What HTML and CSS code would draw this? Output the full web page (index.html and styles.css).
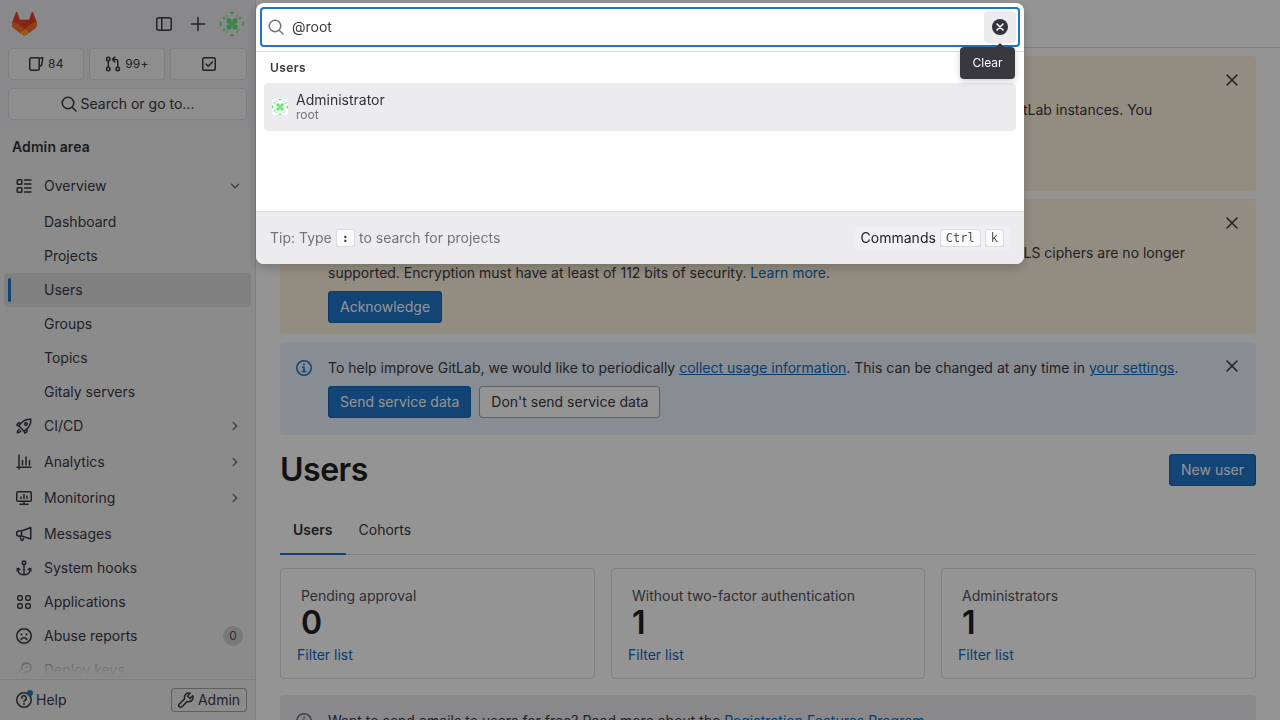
FILE: index.html
```html
<!DOCTYPE html>
<html lang="en">
<head>
<meta charset="utf-8">
<title>Users · Admin area · GitLab</title>
<link rel="stylesheet" href="styles.css">
</head>
<body>
<svg class="sprite" aria-hidden="true">
  <symbol id="i-search" viewBox="0 0 16 16"><circle cx="7" cy="7" r="5.75" class="s"/><path d="M11.2 11.2 15 15" class="s"/></symbol>
  <symbol id="i-close" viewBox="0 0 16 16"><path d="M3 3l10 10M13 3 3 13" class="s"/></symbol>
  <symbol id="i-panel" viewBox="0 0 16 16"><rect x=".75" y="1.75" width="14.5" height="12.5" rx="2" class="s"/><path d="M5.75 2v12" class="s"/></symbol>
  <symbol id="i-plus" viewBox="0 0 16 16"><path d="M8 1.5v13M1.5 8h13" class="s"/></symbol>
  <symbol id="i-issues" viewBox="0 0 16 16"><path d="M10.5 1.75H3.5a1.75 1.75 0 0 0-1.75 1.75v9a1.75 1.75 0 0 0 1.75 1.75h6a1.75 1.75 0 0 0 1.75-1.75V2.5M11.25 2.2c1.3-.6 2.8-.6 3.5-.4l-1 7-2.5 2" class="s"/></symbol>
  <symbol id="i-mr" viewBox="0 0 16 16"><circle cx="3.25" cy="3" r="1.75" class="s"/><circle cx="3.25" cy="13" r="1.75" class="s"/><circle cx="12.75" cy="13" r="1.75" class="s"/><path d="M3.25 4.75v6.5M12.75 11.25V5.5a2 2 0 0 0-2-2H8M9.8 1 7.5 3.5 9.8 6" class="s"/></symbol>
  <symbol id="i-todo" viewBox="0 0 16 16"><rect x="1.75" y="1.75" width="12.5" height="12.5" rx="1.75" class="s"/><path d="M5 8l2.2 2.2L11.5 6" class="s"/></symbol>
  <symbol id="i-overview" viewBox="0 0 16 16"><rect x="1.25" y="1.75" width="4.5" height="4.5" rx=".75" class="s"/><rect x="1.25" y="9.75" width="4.5" height="4.5" rx=".75" class="s"/><path d="M8.5 2h6.5M8.5 6h6.5M8.5 10h6.5M8.5 14h6.5" class="s"/></symbol>
  <symbol id="i-down" viewBox="0 0 16 16"><path d="M4.5 6.25 8 9.75l3.5-3.5" class="s"/></symbol>
  <symbol id="i-right" viewBox="0 0 16 16"><path d="M6.25 4.5 9.75 8l-3.5 3.5" class="s"/></symbol>
  <symbol id="i-rocket" viewBox="0 0 16 16"><path d="M5 5.2C7.5 2.4 10.8 1 14.8 1.2c.2 4-1.2 7.3-4 9.8l-2.7 2.2-5.3-5.3L5 5.2ZM5.3 5H2.2L.9 7.2l2 .8M11 10.7v3.1L8.8 15.1l-.8-2M3 11.3c-1 .6-1.6 1.7-1.7 3.4 1.700-.1 2.800-.7 3.400-1.700" class="s"/><circle cx="10" cy="6" r="1.3" class="s"/></symbol>
  <symbol id="i-chart" viewBox="0 0 16 16"><path d="M1 13.250h14M3 1v14M6.500 6.500v4.500M10 3v8M13.500 6.500v4.500" class="s"/></symbol>
  <symbol id="i-monitor" viewBox="0 0 16 16"><rect x=".75" y="1.750" width="14.500" height="9.500" rx="1.250" class="s"/><path d="M8 11.500v3M4 14.250h8M5 8.500V7M8 8.500V4.500M11 8.500V6" class="s"/></symbol>
  <symbol id="i-mega" viewBox="0 0 16 16"><path d="M14.750 1.500v11.500L5.500 10H2.500a1.750 1.750 0 0 1-1.750-1.750v-1.500A1.750 1.750 0 0 1 2.500 5h3l9.250-3.500ZM5.500 5v5M4 10.200l1 3.300a1.250 1.250 0 0 0 2.400-.7L6.800 10.600" class="s"/></symbol>
  <symbol id="i-anchor" viewBox="0 0 16 16"><circle cx="8" cy="2.750" r="1.750" class="s"/><path d="M8 4.500v10.250M1.200 8.500l.8 2.500c.7 2.300 3 3.750 6 3.750s5.300-1.450 6-3.750l.8-2.500M1 10.700l1-2.200 2 1.200M15 10.700l-1-2.200-2 1.200" class="s"/></symbol>
  <symbol id="i-apps" viewBox="0 0 16 16"><rect x="1.750" y="1.750" width="4.500" height="4.500" rx="1.500" class="s"/><rect x="9.750" y="1.750" width="4.500" height="4.500" rx="1.500" class="s"/><rect x="1.750" y="9.750" width="4.500" height="4.500" rx="1.500" class="s"/><rect x="9.750" y="9.750" width="4.500" height="4.500" rx="1.500" class="s"/></symbol>
  <symbol id="i-sad" viewBox="0 0 16 16"><circle cx="8" cy="8" r="7.250" class="s"/><path d="M5 11.500c.7-1.200 1.700-1.800 3-1.800s2.300.6 3 1.800" class="s"/><circle cx="5.500" cy="6.500" r="1" class="f"/><circle cx="10.500" cy="6.500" r="1" class="f"/></symbol>
  <symbol id="i-key" viewBox="0 0 16 16"><path d="M10.500 1a4.500 4.500 0 0 0-4.300 5.800L1 12v3h3l1-1v-1.500h1.500V11H8l1.200-1.200A4.500 4.500 0 1 0 10.500 1Z" class="s"/><circle cx="11" cy="5" r="1" class="f"/></symbol>
  <symbol id="i-help" viewBox="0 0 16 16"><circle cx="8" cy="8" r="7.250" class="s"/><path d="M5.700 6.200A2.300 2.300 0 1 1 9 8.200c-.6.300-1 .8-1 1.500" class="s"/><circle cx="8" cy="12" r="1" class="f"/></symbol>
  <symbol id="i-wrench" viewBox="0 0 16 16"><path d="M14.700 3.800 12 6.500l-2.500-2.500 2.700-2.700a4.250 4.250 0 0 0-5.500 5.400L1.300 12a1.900 1.900 0 0 0 2.700 2.700l5.300-5.300a4.250 4.250 0 0 0 5.400-5.600Z" class="s"/></symbol>
  <symbol id="i-info" viewBox="0 0 16 16"><circle cx="8" cy="8" r="7.250" class="s"/><circle cx="8" cy="4.500" r="1" class="f"/><path d="M6.500 7.250H8v4.250M6.250 11.500h3.500" class="s"/></symbol>
  <symbol id="i-avatar" viewBox="0 0 24 24">
    <g class="av">
      <circle cx="9" cy="9" r="2.700"/><circle cx="15" cy="9" r="2.700"/><circle cx="9" cy="15" r="2.700"/><circle cx="15" cy="15" r="2.700"/>
      <path d="M10 12h4v-1.500h-4zM10.500 13.500h3V10.500h-3z"/>
      <path d="M9 0h6l-3 2.500zM9 24h6l-3-2.500zM0 9v6l2.500-3zM24 9v6l-2.500-3z"/>
      <path d="M2 4.500 6 6l-2 2zM22 4.500 18 6l2 2zM2 19.500 6 18l-2-2zM22 19.500 18 18l-2-2zM5 2l3 2-1.500 1zM19 2l-3 2 1.500 1zM5 22l3-2-1.500-1zM19 22l-3-2 1.500-1z"/>
    </g>
  </symbol>
</svg>

<div class="app">
  <aside class="sidebar">
    <div class="side-top">
      <div class="brand-row">
        <svg class="logo" viewBox="0 0 25 24" width="25" height="24" aria-label="GitLab">
          <path d="m24.507 9.5-.034-.09L21.082.562a.896.896 0 0 0-1.694.091l-2.29 7.01H7.825L5.535.653a.898.898 0 0 0-1.694-.09L.451 9.411.416 9.5a6.297 6.297 0 0 0 2.09 7.278l.012.01.03.022 5.16 3.867 2.56 1.935 1.554 1.176a1.051 1.051 0 0 0 1.268 0l1.555-1.176 2.56-1.935 5.197-3.89.014-.01A6.297 6.297 0 0 0 24.507 9.5Z" fill="#E24329"/>
          <path d="m24.507 9.5-.034-.09a11.44 11.44 0 0 0-4.56 2.051l-7.447 5.632 4.742 3.584 5.197-3.89.014-.01A6.297 6.297 0 0 0 24.507 9.5Z" fill="#FC6D26"/>
          <path d="m7.707 20.677 2.56 1.935 1.555 1.176a1.051 1.051 0 0 0 1.268 0l1.555-1.176 2.56-1.935-4.743-3.584-4.755 3.584Z" fill="#FCA326"/>
          <path d="M5.01 11.461a11.43 11.43 0 0 0-4.56-2.05L.416 9.5a6.297 6.297 0 0 0 2.09 7.278l.012.01.03.022 5.16 3.867 4.745-3.584-7.444-5.632Z" fill="#FC6D26"/>
        </svg>
        <div class="brand-actions">
          <svg class="ico"><use href="#i-panel"/></svg>
          <svg class="ico"><use href="#i-plus"/></svg>
          <span class="avatar-wrap"><svg class="avatar"><use href="#i-avatar"/></svg></span>
        </div>
      </div>
      <div class="counts">
        <div class="count-btn"><svg class="ico"><use href="#i-issues"/></svg><span>84</span></div>
        <div class="count-btn"><svg class="ico"><use href="#i-mr"/></svg><span>99+</span></div>
        <div class="count-btn"><svg class="ico"><use href="#i-todo"/></svg></div>
      </div>
      <div class="search-btn"><svg class="ico"><use href="#i-search"/></svg><span>Search or go to...</span></div>
    </div>
    <nav class="side-nav">
      <div class="side-title">Admin area</div>
      <a class="row tall"><svg class="ico"><use href="#i-overview"/></svg><span class="row-label">Overview</span><svg class="chev"><use href="#i-down"/></svg></a>
      <div class="sub">
        <a class="row">Dashboard</a>
        <a class="row">Projects</a>
        <a class="row current">Users</a>
        <a class="row">Groups</a>
        <a class="row">Topics</a>
        <a class="row">Gitaly servers</a>
      </div>
      <a class="row"><svg class="ico"><use href="#i-rocket"/></svg><span class="row-label">CI/CD</span><svg class="chev"><use href="#i-right"/></svg></a>
      <a class="row tall gap"><svg class="ico"><use href="#i-chart"/></svg><span class="row-label">Analytics</span><svg class="chev"><use href="#i-right"/></svg></a>
      <a class="row tall"><svg class="ico"><use href="#i-monitor"/></svg><span class="row-label">Monitoring</span><svg class="chev"><use href="#i-right"/></svg></a>
      <a class="row mid"><svg class="ico"><use href="#i-mega"/></svg><span class="row-label">Messages</span></a>
      <a class="row"><svg class="ico"><use href="#i-anchor"/></svg><span class="row-label">System hooks</span></a>
      <a class="row"><svg class="ico"><use href="#i-apps"/></svg><span class="row-label">Applications</span></a>
      <a class="row"><svg class="ico"><use href="#i-sad"/></svg><span class="row-label">Abuse reports</span><span class="pill">0</span></a>
      <a class="row"><svg class="ico"><use href="#i-key"/></svg><span class="row-label">Deploy keys</span></a>
      <div class="fade"></div>
    </nav>
    <div class="side-foot">
      <div class="help"><span class="help-ico"><svg class="ico"><use href="#i-help"/></svg><i class="dot"></i></span><span>Help</span></div>
      <div class="admin-btn"><svg class="ico"><use href="#i-wrench"/></svg><span>Admin</span></div>
    </div>
  </aside>

  <main class="main">
    <header class="topbar"></header>
    <div class="content">
      <section class="alert warn first">
        <svg class="ico alert-close"><use href="#i-close"/></svg>
        <h4 class="alert-title">Check your sign-up restrictions</h4>
        <p class="alert-text">Your GitLab instance allows anyone to register for an account, which is a security risk on public-facing GitLab instances. You should deactivate new sign ups if public users aren't expected to register for an account.</p>
      </section>
      <section class="alert warn second">
        <svg class="ico alert-close"><use href="#i-close"/></svg>
        <h4 class="alert-title">OpenSSL version 3</h4>
        <p class="alert-text">Starting with GitLab 17.7, OpenSSL 3 will be used. All TLS connections require TLS 1.2 or above. Weaker TLS ciphers are no longer supported. Encryption must have at least of 112 bits of security. <a class="link">Learn more</a>.</p>
        <div class="alert-actions"><span class="btn primary">Acknowledge</span></div>
      </section>
      <section class="alert info">
        <svg class="ico alert-icon"><use href="#i-info"/></svg>
        <svg class="ico alert-close"><use href="#i-close"/></svg>
        <p class="alert-text">To help improve GitLab, we would like to periodically <a class="link under">collect usage information</a>. This can be changed at any time in <a class="link under">your settings</a>.</p>
        <div class="alert-actions"><span class="btn primary">Send service data</span><span class="btn outline">Don't send service data</span></div>
      </section>

      <div class="page-head">
        <h1 class="page-title">Users</h1>
        <span class="btn primary">New user</span>
      </div>

      <div class="tabs">
        <a class="tab active">Users</a>
        <a class="tab">Cohorts</a>
      </div>

      <div class="cards">
        <div class="card"><div class="card-label">Pending approval</div><div class="card-num">0</div><a class="card-link">Filter list</a></div>
        <div class="card"><div class="card-label">Without two-factor authentication</div><div class="card-num">1</div><a class="card-link">Filter list</a></div>
        <div class="card"><div class="card-label">Administrators</div><div class="card-num">1</div><a class="card-link">Filter list</a></div>
      </div>

      <section class="alert neutral">
        <svg class="ico alert-icon"><use href="#i-info"/></svg>
        <p class="alert-text">Want to send emails to users for free? Read more about the <a class="link">Registration Features Program</a>.</p>
      </section>
    </div>
  </main>
</div>

<div class="backdrop"></div>

<div class="modal" role="dialog">
  <div class="modal-search">
    <div class="input">
      <svg class="ico input-ico"><use href="#i-search"/></svg>
      <span class="input-text">@root</span>
      <span class="clear-btn">
        <svg class="clear-ico" viewBox="0 0 16 16"><circle cx="8" cy="8" r="8" fill="#333238"/><path d="M5 5l6 6M11 5l-6 6" stroke="#fff" stroke-width="1.600" stroke-linecap="round"/></svg>
      </span>
    </div>
  </div>
  <div class="modal-body">
    <div class="group-title">Users</div>
    <div class="result">
      <svg class="result-avatar"><use href="#i-avatar"/></svg>
      <div class="result-text"><div class="result-name">Administrator</div><div class="result-sub">root</div></div>
    </div>
  </div>
  <div class="modal-foot">
    <div class="tip">Tip: Type <kbd class="key">:</kbd> to search for projects</div>
    <div class="cmds"><span>Commands</span><kbd class="key">Ctrl</kbd><kbd class="key">k</kbd></div>
  </div>
  <div class="tooltip">Clear</div>
</div>
</body>
</html>
```
FILE: styles.css
```css
* { box-sizing: border-box; }
html, body { margin: 0; height: 100%; overflow: hidden; }
body { font-family: Inter, "Noto Sans", sans-serif; font-size: 14px; line-height: 20px; color: #3a383f; background: #fff; }
.sprite { position: absolute; width: 0; height: 0; }
.s { fill: none; stroke: currentColor; stroke-width: 1.5; stroke-linecap: round; stroke-linejoin: round; }
.f { fill: currentColor; }
.av { fill: #66e37d; }
.ico { width: 16px; height: 16px; flex: none; display: block; color: #3a383f; }
p, h1, h4 { margin: 0; }

.app { display: flex; height: 720px; overflow: hidden; }

/* Sidebar */
.sidebar { width: 256px; flex: none; height: 720px; display: flex; flex-direction: column; background: #f0f0f2; border-right: 1px solid #dcdcde; }
.side-top { height: 127px; flex: none; padding: 0 8px; background: #ececef; }
.brand-row { height: 48px; display: flex; align-items: center; justify-content: space-between; padding: 0 4px; }
.logo { display: block; }
.brand-actions { display: flex; align-items: center; gap: 18px; margin-right: -1px; }
.avatar-wrap { width: 24px; height: 24px; border-radius: 50%; background: #eee; display: block; margin-left: -4px; overflow: hidden; }
.avatar { width: 24px; height: 24px; display: block; }
.counts { display: grid; grid-template-columns: 76px 76px 77px; gap: 5px; }
.count-btn { height: 32px; display: flex; align-items: center; justify-content: center; gap: 4px; border-radius: 4px; background: #f4f4f5; box-shadow: inset 0 0 0 1px #dcdcde; font-size: 12px; letter-spacing: .3px; }
.search-btn { margin-top: 8px; height: 32px; display: flex; align-items: center; justify-content: center; gap: 4px; border-radius: 4px; background: #f4f4f5; box-shadow: inset 0 0 0 1px #dcdcde; }
.side-nav { position: relative; flex: 1; min-height: 0; overflow: hidden; }
.side-title { height: 41px; padding: 10px 12px 0; font-weight: 600; letter-spacing: .1px; color: #333238; }
.row { height: 34px; margin: 0 4px; padding-left: 12px; display: flex; align-items: center; gap: 12px; border-radius: 4px; color: #3a383f; position: relative; }
.row.tall { height: 36px; }
.row.mid { height: 35px; }
.row.gap { margin-top: 1px; }
.row-label { flex: 1; }
.sub { margin-top: 1px; }
.sub .row { padding-left: 40px; }
.current { background: #dcdcde; }
.current::before { content: ""; position: absolute; left: 4px; top: 5px; bottom: 5px; width: 3px; border-radius: 2px; background: #1f75cb; }
.chev { width: 16px; height: 16px; margin-right: 8px; color: #737278; flex: none; display: block; }
.pill { width: 20px; height: 20px; margin-right: 8px; border-radius: 50%; background: #d1d0d3; font-size: 12px; text-align: center; color: #535158; }
.fade { position: absolute; left: 0; right: 0; bottom: 0; height: 36px; background: linear-gradient(to bottom, rgba(240,240,242,0), #f0f0f2 90%); }
.side-foot { height: 41px; flex: none; border-top: 1px solid #dcdcde; display: flex; align-items: center; justify-content: space-between; padding: 0 8px 0 16px; }
.help { display: flex; align-items: center; gap: 4px; }
.help-ico { position: relative; display: block; }
.dot { position: absolute; top: -2px; right: -1px; width: 6px; height: 6px; border-radius: 50%; background: #1f75cb; }
.admin-btn { height: 24px; width: 76px; display: flex; align-items: center; justify-content: center; gap: 4px; border-radius: 4px; box-shadow: inset 0 0 0 1px #a4a3a8; }

/* Main */
.main { flex: 1; min-width: 0; height: 720px; overflow: hidden; }
.topbar { height: 48px; border-bottom: 1px solid #dcdcde; }
.content { padding: 8px 24px 0; display: flex; flex-direction: column; }
.alert { position: relative; flex: none; padding: 16px 64px 16px 48px; border-radius: 4px; margin-bottom: 8px; }
.warn { background: #fdf1dd; }
.info { background: #e9f3fc; height: 93px; margin-bottom: 0; }
.neutral { background: #ececef; margin-top: 16px; }
.first { height: 135px; }
.second { height: 135px; }
.alert-title { font-size: 14px; line-height: 20px; font-weight: 600; color: #1f1e24; margin-bottom: 8px; }
.first .alert-title { margin-top: 0; }
.alert-text { color: #3a383f; }
.alert-close { position: absolute; right: 16px; top: 16px; }
.alert-icon { position: absolute; left: 16px; top: 18px; color: #1f75cb; }
.neutral .alert-icon { color: #737278; }
.alert-actions { display: flex; gap: 8px; margin-top: 8px; }
.btn { height: 32px; display: inline-flex; align-items: center; padding: 0 12px; border-radius: 4px; }
.primary { background: #1f75cb; color: #fff; box-shadow: inset 0 0 0 1px #1068bf; }
.outline { background: #fff; box-shadow: inset 0 0 0 1px #a4a3a8; color: #3a383f; }
.link { color: #1068bf; }
.under { text-decoration: underline; }

.page-head { margin-top: 19px; height: 32px; display: flex; align-items: center; justify-content: space-between; }
.page-title { font-size: 32px; line-height: 32px; font-weight: 600; color: #1f1e24; letter-spacing: -.5px; }

.tabs { margin-top: 19px; height: 50px; display: flex; box-shadow: inset 0 -1px 0 #dcdcde; }
.tab { height: 50px; padding: 0 13px; display: flex; align-items: center; color: #3a383f; }
.tab.active { font-weight: 600; box-shadow: inset 0 -2px 0 #1f75cb; color: #333238; }

.cards { margin-top: 13px; display: grid; grid-template-columns: 315px 314px 315px; gap: 16px; }
.card { height: 111px; border: 1px solid #dcdcde; border-radius: 4px; padding: 17px 16px 0; }
.card-label { padding-left: 4px; color: #535158; }
.card-num { padding-left: 4px; font-size: 32px; line-height: 32px; font-weight: 600; color: #1f1e24; margin-top: 1px; }
.card-link { display: block; margin-top: 6px; color: #1068bf; }

/* Overlay */
.backdrop { position: fixed; inset: 0; background: rgba(0, 0, 0, .42); }
.modal { position: fixed; left: 256px; top: 3px; width: 768px; height: 261px; background: #fff; border-radius: 8px; display: flex; flex-direction: column; box-shadow: 0 4px 12px rgba(0,0,0,.2); }
.modal-search { height: 49px; flex: none; padding: 4px 4px 0; border-bottom: 1px solid #dcdcde; }
.input { height: 40px; border: 2px solid #1f75cb; border-radius: 4px; display: flex; align-items: center; padding-left: 6px; position: relative; }
.input-ico { color: #737278; }
.input-text { margin-left: 8px; color: #3a383f; }
.clear-btn { position: absolute; right: 2px; top: 2px; width: 32px; height: 32px; border-radius: 4px; background: #ececef; display: flex; align-items: center; justify-content: center; }
.clear-ico { width: 16px; height: 16px; display: block; }
.modal-body { flex: 1; padding: 0 8px; }
.group-title { height: 31px; padding: 8px 6px 0; font-size: 12px; line-height: 16px; font-weight: 600; letter-spacing: .4px; color: #3a383f; }
.result { height: 48px; border-radius: 4px; background: #ececef; display: flex; align-items: center; gap: 8px; padding-left: 8px; }
.result-avatar { width: 16px; height: 16px; background: #fff; border-radius: 2px; display: block; flex: none; }
.result-name { line-height: 16px; color: #333238; }
.result-sub { font-size: 12px; line-height: 14px; color: #737278; }
.modal-foot { height: 53px; flex: none; background: #ececef; border-top: 1px solid #dcdcde; border-radius: 0 0 8px 8px; display: flex; align-items: center; justify-content: space-between; padding: 0 14px; }
.tip { color: #737278; display: flex; align-items: center; gap: 4px; }
.cmds { height: 23px; padding: 0 6px; display: flex; align-items: center; gap: 4px; background: #f0f0f2; border-radius: 4px; color: #1f1e24; }
.key { font-family: "DejaVu Sans Mono", "Liberation Mono", monospace; font-size: 12px; line-height: 16px; padding: 1px 6px; height: 18px; background: #fbfafd; border-radius: 3px; box-shadow: inset 0 0 0 1px #dcdcde, inset 0 -1px 0 #bfbfc3; color: #535158; display: block; }
.tip .key { font-weight: 700; color: #333238; }
.tooltip { position: absolute; left: 704px; top: 44px; width: 55px; height: 32px; background: #3a383f; border-radius: 4px; color: #fff; font-size: 12px; line-height: 32px; text-align: center; box-shadow: 0 2px 6px rgba(0,0,0,.2); }
.tooltip::before { content: ""; position: absolute; left: 36px; top: -4px; border-left: 4px solid transparent; border-right: 4px solid transparent; border-bottom: 4px solid #3a383f; }
```
